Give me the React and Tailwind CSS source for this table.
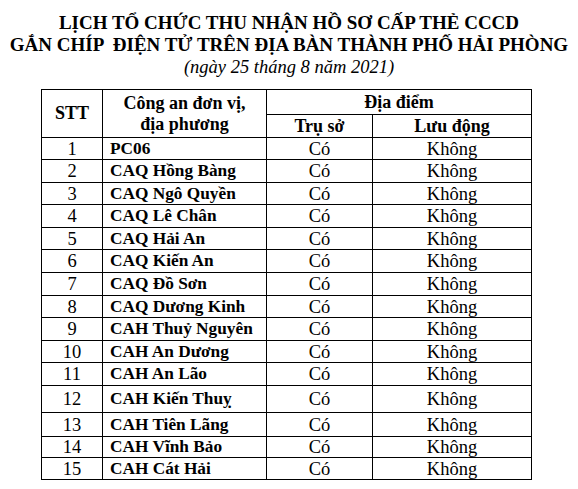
const rows = [
  ["1", "PC06", 22],
  ["2", "CAQ Hồng Bàng", 23],
  ["3", "CAQ Ngô Quyền", 22],
  ["4", "CAQ Lê Chân", 23],
  ["5", "CAQ Hải An", 22],
  ["6", "CAQ Kiến An", 23],
  ["7", "CAQ Đồ Sơn", 23],
  ["8", "CAQ Dương Kinh", 22],
  ["9", "CAH Thuỷ Nguyên", 23],
  ["10", "CAH An Dương", 22],
  ["11", "CAH An Lão", 23],
  ["12", "CAH Kiến Thuỵ", 27],
  ["13", "CAH Tiên Lãng", 24],
  ["14", "CAH Vĩnh Bảo", 21],
  ["15", "CAH Cát Hải", 22],
]

const serif = "font-['Liberation_Serif','Times_New_Roman',serif]"

export default function App() {
  return (
    <div className={`w-[578px] h-[489px] bg-white text-black pt-[12px] ${serif}`}>
      <div className={`text-center font-bold text-[19px] leading-[22px] ${serif}`}>
        <div>LỊCH TỔ CHỨC THU NHẬN HỒ SƠ CẤP THẺ CCCD</div>
        <div className="whitespace-pre">GẮN CHÍP  ĐIỆN TỬ TRÊN ĐỊA BÀN THÀNH PHỐ HẢI PHÒNG</div>
      </div>
      <div className={`text-center italic text-[18.5px] leading-[22px] ${serif}`}>(ngày 25 tháng 8 năm 2021)</div>

      <table className={`ml-[41px] mt-[11px] border-collapse text-[18.5px] ${serif}`}>
        <thead className="font-bold text-[18px]">
          <tr className="h-[25px]">
            <th rowSpan={2} className={`w-[61px] border border-black text-center align-middle leading-[21px] p-0 ${serif}`}>STT</th>
            <th rowSpan={2} className={`w-[164px] border border-black text-center align-middle leading-[21px] p-0 ${serif}`}>
              Công an đơn vị,
              <br />
              địa phương
            </th>
            <th colSpan={2} className={`border border-black text-center leading-[21px] p-0 ${serif}`}>Địa điểm</th>
          </tr>
          <tr className="h-[23px]">
            <th className={`w-[106px] border border-black text-center leading-[20px] p-0 ${serif}`}>Trụ sở</th>
            <th className={`w-[159px] border border-black text-center leading-[20px] p-0 ${serif}`}>Lưu động</th>
          </tr>
        </thead>
        <tbody>
          {rows.map(([stt, name, h]) => (
            <tr key={stt} style={{ height: h }}>
              <td className={`border border-black text-center leading-[20px] p-0 ${serif}`}>{stt}</td>
              <td className={`border border-black font-bold text-[17.3px] leading-[20px] p-0 pl-[7px] ${serif}`}>{name}</td>
              <td className={`border border-black text-center leading-[20px] p-0 ${serif}`}>Có</td>
              <td className={`border border-black text-center leading-[20px] p-0 ${serif}`}>Không</td>
            </tr>
          ))}
        </tbody>
      </table>
    </div>
  )
}
